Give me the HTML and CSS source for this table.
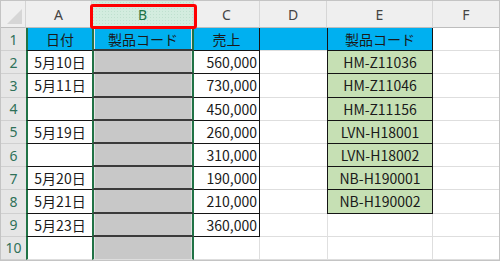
FILE: index.html
```html
<!DOCTYPE html>
<html lang="ja">
<head>
<meta charset="utf-8">
<link rel="stylesheet" href="styles.css">
</head>
<body>
<div class="sheet">
  <div class="grid">
    <div class="corner"><span class="tri"></span></div>
    <div class="ch">A</div>
    <div class="ch sel">B</div>
    <div class="ch">C</div>
    <div class="ch">D</div>
    <div class="ch">E</div>
    <div class="ch last">F</div>

    <div class="rh">1</div>
    <div class="cell a t hd">日付</div>
    <div class="cell b t hd">製品コード</div>
    <div class="cell c t hd ctr">売上</div>
    <div class="cell d hd"></div>
    <div class="cell e hd first">製品コード</div>
    <div class="cell f"></div>

    <div class="rh">2</div>
    <div class="cell a t">5月10日</div>
    <div class="cell b t"></div>
    <div class="cell c t">560,000</div>
    <div class="cell d"></div>
    <div class="cell e g">HM-Z11036</div>
    <div class="cell f"></div>

    <div class="rh">3</div>
    <div class="cell a t">5月11日</div>
    <div class="cell b t"></div>
    <div class="cell c t">730,000</div>
    <div class="cell d"></div>
    <div class="cell e g">HM-Z11046</div>
    <div class="cell f"></div>

    <div class="rh">4</div>
    <div class="cell a t"></div>
    <div class="cell b t"></div>
    <div class="cell c t">450,000</div>
    <div class="cell d"></div>
    <div class="cell e g">HM-Z11156</div>
    <div class="cell f"></div>

    <div class="rh">5</div>
    <div class="cell a t">5月19日</div>
    <div class="cell b t"></div>
    <div class="cell c t">260,000</div>
    <div class="cell d"></div>
    <div class="cell e g">LVN-H18001</div>
    <div class="cell f"></div>

    <div class="rh">6</div>
    <div class="cell a t"></div>
    <div class="cell b t"></div>
    <div class="cell c t">310,000</div>
    <div class="cell d"></div>
    <div class="cell e g">LVN-H18002</div>
    <div class="cell f"></div>

    <div class="rh">7</div>
    <div class="cell a t">5月20日</div>
    <div class="cell b t"></div>
    <div class="cell c t">190,000</div>
    <div class="cell d"></div>
    <div class="cell e g">NB-H190001</div>
    <div class="cell f"></div>

    <div class="rh">8</div>
    <div class="cell a t">5月21日</div>
    <div class="cell b t"></div>
    <div class="cell c t">210,000</div>
    <div class="cell d"></div>
    <div class="cell e g">NB-H190002</div>
    <div class="cell f"></div>

    <div class="rh">9</div>
    <div class="cell a t">5月23日</div>
    <div class="cell b t"></div>
    <div class="cell c t">360,000</div>
    <div class="cell d"></div>
    <div class="cell e"></div>
    <div class="cell f"></div>

    <div class="rh">10</div>
    <div class="cell a"></div>
    <div class="cell b"></div>
    <div class="cell c"></div>
    <div class="cell d"></div>
    <div class="cell e"></div>
    <div class="cell f"></div>
  </div>
  <div class="mark"></div>
</div>
</body>
</html>
```
FILE: styles.css
```css
* { box-sizing: border-box; }
html, body { margin: 0; padding: 0; background: #fff; }
body {
  font-family: "Noto Sans CJK JP", "Noto Sans", sans-serif;
  font-size: 14px;
  color: #1a1a1a;
}
.sheet {
  position: relative;
  width: 500px;
  height: 261px;
  border: 1px solid #c4c4c4;
  overflow: hidden;
}
.grid {
  display: grid;
  grid-template-columns: 25px 66px 102px 66px 67px 106px 66px;
  grid-template-rows: 27px repeat(10, 1fr);
  height: 100%;
}
.corner {
  position: relative;
  background: #efefef;
  border-bottom: 1px solid #bdbdbd;
  border-right: 1px solid #d4d4d4;
}
.tri {
  position: absolute;
  right: 3px;
  bottom: 3px;
  width: 15px;
  height: 15px;
  background: #d6d6d6;
  clip-path: polygon(100% 0, 100% 100%, 0 100%);
}
.ch {
  display: flex;
  align-items: center;
  justify-content: center;
  background: #efefef;
  border-bottom: 1px solid #bdbdbd;
  border-right: 1px solid #d6d6d6;
  font-family: "Noto Sans", sans-serif;
  font-size: 14px;
  color: #444;
  padding-top: 1px;
}
.ch.last { border-right: 0; }
.ch.sel {
  color: #217346;
  background-color: #d3ecdf;
  background-image: radial-gradient(circle, #bfe0cf 0.6px, transparent 0.9px);
  background-size: 3px 3px;
  border-bottom: 2px solid #217346;
}
.rh {
  display: flex;
  align-items: center;
  justify-content: center;
  background: #e6e6e6;
  border-bottom: 1px solid #d0d0d0;
  font-family: "Noto Sans", sans-serif;
  font-size: 14px;
  color: #2f7159;
}
.cell {
  display: flex;
  align-items: center;
  justify-content: center;
  border-right: 1px solid #dedede;
  border-bottom: 1px solid #dedede;
  white-space: nowrap;
  overflow: hidden;
}
.hd { background: #00b0f0; }
.a {
  border-left: 2px solid #217346;
  border-right: 0;
}
.a.t { border-bottom: 1px solid #141414; }
.b {
  background-color: #c8c8c8;
  border-left: 2px solid #217346;
  border-right: 2px solid #217346;
  box-shadow: inset 1px 0 0 #e2e2e2, inset -1px 0 0 #e2e2e2;
}
.b.t { border-bottom: 2px solid #3a3a3a; }
.b.hd { background-color: #00b0f0; }
.c { justify-content: flex-end; padding-right: 2px; }
.c.ctr { justify-content: center; padding-right: 0; }
.c.t {
  border-right: 1px solid #141414;
  border-bottom: 1px solid #141414;
}
.d { border-right: 0; }
.e {
  border-left: 1px solid #e0e0e0;
}
.e.hd, .e.g {
  border-left: 1px solid #141414;
  border-right: 1px solid #141414;
  border-bottom: 1px solid #141414;
}
.e.g { background: #c6e0b4; }
.f { border-right: 0; }
.mark {
  position: absolute;
  left: 89px;
  top: 3px;
  width: 107px;
  height: 25px;
  border: 3px solid #f00;
  border-radius: 3px;
}
```
